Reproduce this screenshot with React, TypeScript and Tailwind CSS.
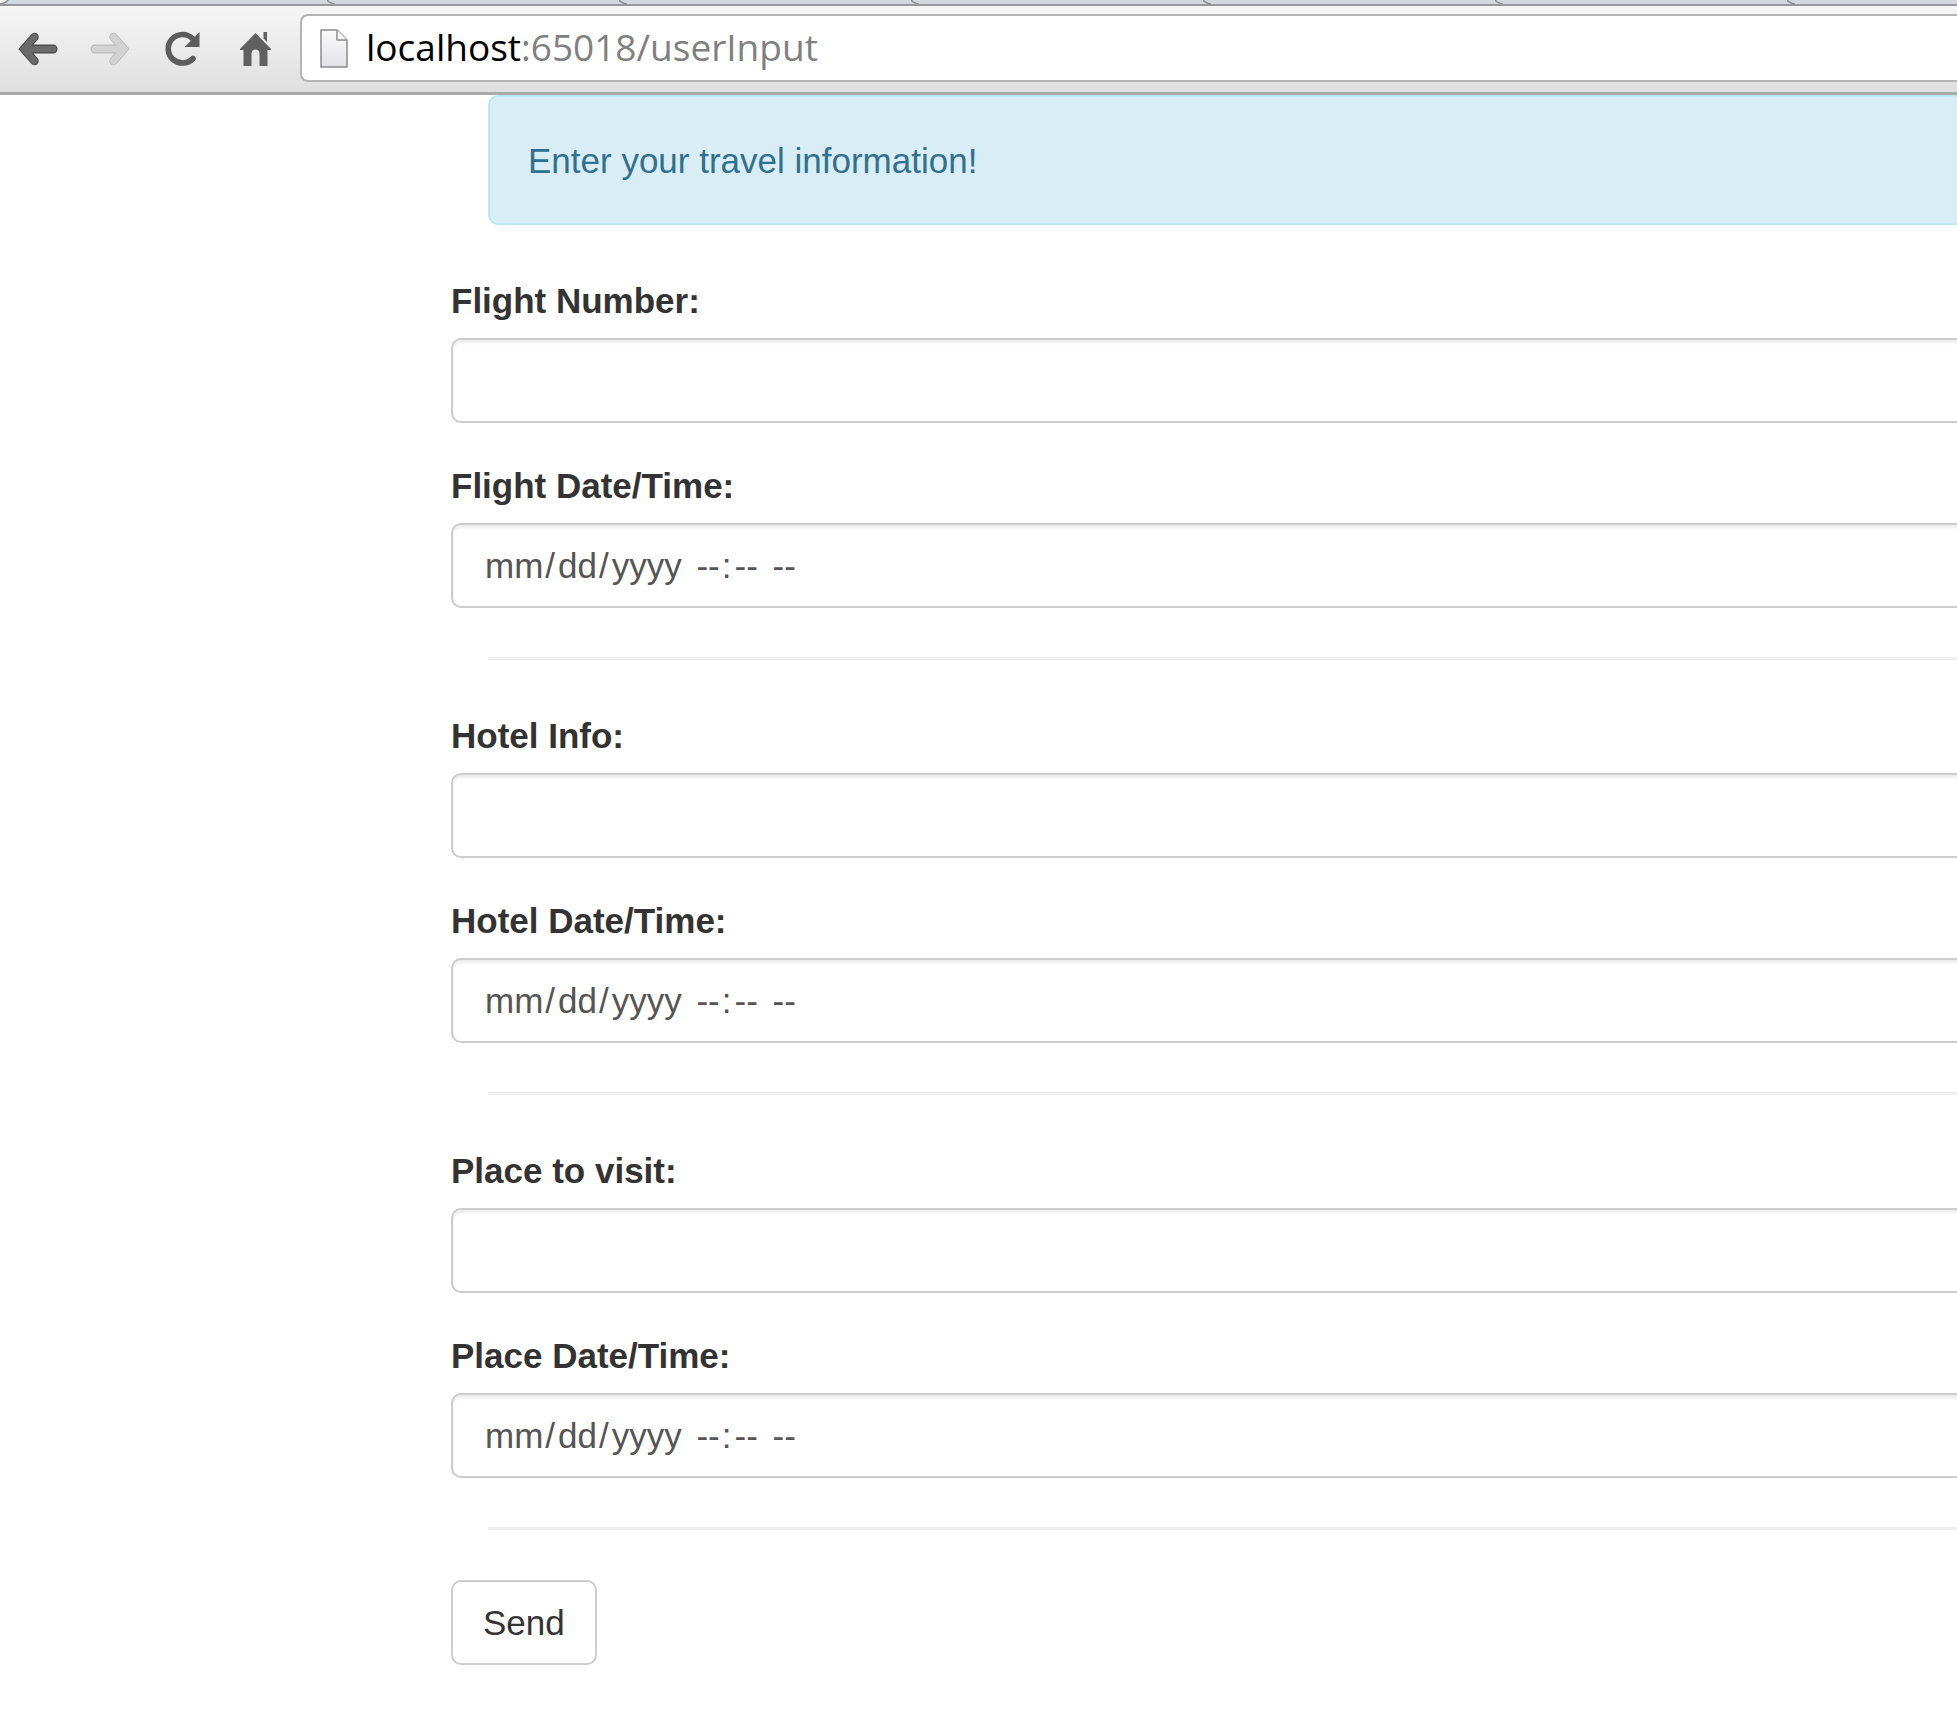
import React, { useState } from "react";

const sections = [
  { text: "Flight Number:", date: "Flight Date/Time:", id: "flight" },
  { text: "Hotel Info:", date: "Hotel Date/Time:", id: "hotel" },
  { text: "Place to visit:", date: "Place Date/Time:", id: "place" },
];

const label = "block text-[35px] leading-[51px] font-bold text-[#333] mb-3";
const control =
  "block w-full h-[85px] rounded-[10px] border-2 border-[#ccc] bg-white px-[30px] text-[35px] shadow-[inset_0_3px_3px_rgba(0,0,0,0.075)] outline-none";

function TabStrip() {
  return (
    <div className="flex h-1 overflow-hidden bg-[#d3d8e0]">
      <svg className="h-1 w-[43px] shrink-0" viewBox="0 0 43 4">
        <path d="M0 0H8Q6 3 0 4Z" fill="#f5f5f5" />
        <path d="M8 0Q6 3 0 4" stroke="#8c8c90" strokeWidth="1.5" fill="none" />
      </svg>
      {[0, 1, 2, 3, 4, 5].map((i) => (
        <div key={i} className="flex h-1 w-[292px] shrink-0 justify-end">
          <svg className="h-1 w-2" viewBox="0 0 8 4">
            <path d="M0 0Q2 3 8 4" stroke="#8c8c90" strokeWidth="1.5" fill="none" />
          </svg>
        </div>
      ))}
    </div>
  );
}

function Arrow({ flip, dim }: { flip?: boolean; dim?: boolean }) {
  const shaft = "M35 20H8";
  const head = "M16.500 8L6 20L16.500 32";
  const edge = dim ? "#bdbdbd" : "#484848";
  const fill = dim ? "#d3d3d3" : "#6a6a6a";
  return (
    <svg className={flip ? "size-10 rotate-180" : "size-10"} viewBox="0 0 40 40" fill="none" strokeLinecap="round" strokeLinejoin="miter">
      <path d={shaft} stroke={edge} strokeWidth="9" />
      <path d={head} stroke={edge} strokeWidth="8.500" />
      <path d={shaft} stroke={fill} strokeWidth="6.500" />
      <path d={head} stroke={fill} strokeWidth="6.500" />
    </svg>
  );
}

const part = "pl-[3px] pr-[2px]";

function DateTimeField({ id }: { id: string }) {
  const [value, setValue] = useState("");
  return (
    <div className="relative">
      <input
        id={id}
        type="datetime-local"
        value={value}
        onChange={(e) => setValue(e.target.value)}
        className={control + (value ? " text-[#555]" : " text-transparent")}
      />
      {!value && (
        <div aria-hidden="true" className="pointer-events-none absolute inset-0 flex items-center whitespace-pre pl-[31px] text-[35px] leading-[51px] text-[#555]">
          <span className={part}>mm</span>/<span className={part}>dd</span>/<span className={part}>yyyy</span>
          <span>{" "}</span>
          <span className={part}>--</span>:<span className={part}>--</span>
          <span>{" "}</span>
          <span className={part}>--</span>
        </div>
      )}
    </div>
  );
}

export default function App() {
  return (
    <div className="min-h-screen overflow-x-hidden bg-white font-['Liberation_Sans',Arial,sans-serif]">
      <header>
        <TabStrip />
        <div className="flex h-[91px] items-center gap-8 border-t-2 border-b-3 border-t-[#98989c] border-b-[#a9a9a9] bg-linear-to-b from-[#f6f6f6] to-[#dfdfdf] pl-[18px]">
          <button aria-label="Back"><Arrow /></button>
          <button aria-label="Forward"><Arrow flip dim /></button>
          <button aria-label="Reload">
            <svg className="size-10" viewBox="-1 0 40 40" fill="none">
              <path d="M30 29.500A14.300 14.300 0 1 1 29.500 9.500" stroke="#5c5c5c" strokeWidth="5.600" strokeLinecap="round" />
              <path d="M36.500 3V18H21.500Z" fill="#5c5c5c" />
            </svg>
          </button>
          <button aria-label="Home">
            <svg className="size-10" viewBox="0 0 40 40" fill="#606060">
              <path d="M21.500 4L37 20V21H33.500V37H25.500V25Q25.500 20.500 21.500 20.500T17.500 25V37H9.500V21H6V20Z" />
              <path d="M29.500 3H33V13L29.500 9.500Z" />
            </svg>
          </button>
          <div className="-ml-[6px] mb-[2px] flex h-[68px] flex-1 items-center gap-[18px] rounded-l-[8px] border-2 border-r-0 border-[#b4b4b4] bg-white pl-[18px]">
            <svg className="h-[40px] w-[28px] shrink-0" viewBox="0 0 28 40">
              <defs>
                <linearGradient id="page" x1="0" y1="0" x2="0" y2="1">
                  <stop offset="0" stopColor="#fafafa" />
                  <stop offset="1" stopColor="#e2e2e6" />
                </linearGradient>
              </defs>
              <path d="M1 2H17L27 12V39H1Z" fill="url(#page)" stroke="#8c8c8c" strokeWidth="1.500" />
              <path d="M17 2V12H27" fill="#fff" stroke="#8c8c8c" strokeWidth="1.500" />
            </svg>
            <div className="pb-[2px] font-['Open_Sans',sans-serif] text-[37px] leading-[50px] text-[#808080]">
              <span className="text-black">localhost</span>:65018/userInput
            </div>
          </div>
        </div>
      </header>
      <form className="-mr-[100px] pl-[451px]" onSubmit={(e) => e.preventDefault()}>
        <div className="mb-[50px] ml-[37px] rounded-[10px] border-2 border-[#bce8f1] bg-[#d9edf7] px-[38px] pt-[39px] pb-[37px] text-[35px] leading-[50px] text-[#31708f]">
          Enter your travel information!
        </div>
        {sections.map((s) => (
          <React.Fragment key={s.id}>
            <label htmlFor={s.id} className={label}>{s.text}</label>
            <input id={s.id} type="text" className={control + " text-[#555]"} />
            <label htmlFor={s.id + "-date"} className={label + " mt-[37px]"}>{s.date}</label>
            <DateTimeField id={s.id + "-date"} />
            <hr className="mt-[49px] mb-[50px] ml-[37px] border-t-3 border-[#eee]" />
          </React.Fragment>
        ))}
        <button className="mb-[70px] h-[85px] rounded-[10px] border-2 border-[#ccc] bg-white px-[30px] text-[35px] leading-[50px] text-[#333]">
          Send
        </button>
      </form>
    </div>
  );
}
